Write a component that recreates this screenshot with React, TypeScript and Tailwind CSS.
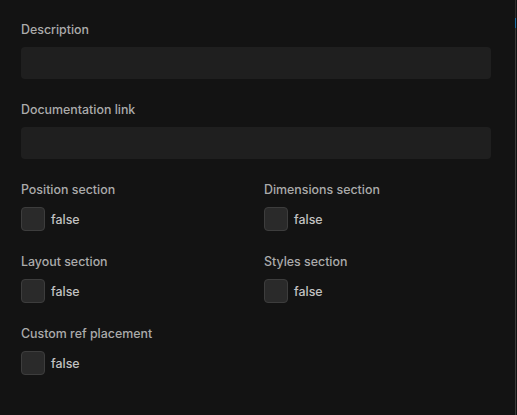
import React from 'react';

const font = { fontFamily: 'Inter, "Noto Sans", sans-serif' };

const TextField: React.FC<{ label: string }> = ({ label }) => (
  <div className="flex flex-col">
    <label className="text-[12.4px] font-medium leading-[18px] text-[#ababab] mt-px mb-[8px]">{label}</label>
    <div className="h-8 w-full rounded bg-[#1f1f1f]" />
  </div>
);

const BoolField: React.FC<{ label: string }> = ({ label }) => (
  <div className="flex flex-col">
    <label className="text-[12.4px] font-medium leading-[18px] text-[#ababab] mt-px mb-[8px]">{label}</label>
    <div className="flex items-center gap-[6px] h-6">
      <div className="w-6 h-6 rounded bg-[#2a2a2a] border border-[#3d3d3d]" />
      <span className="text-[12.4px] font-medium leading-[22px] pt-[2px] text-[#c2c2c2]">false</span>
    </div>
  </div>
);

export default function App() {
  return (
    <div className="flex h-[415px] w-full bg-[#131313]" style={font}>
      <div className="flex-1 flex flex-col gap-[21px] pt-5 pl-[21px] pr-[24px]">
        <TextField label="Description" />
        <TextField label="Documentation link" />
        <div className="grid grid-cols-2 gap-x-4 gap-y-[21px]">
          <BoolField label="Position section" />
          <BoolField label="Dimensions section" />
          <BoolField label="Layout section" />
          <BoolField label="Styles section" />
          <BoolField label="Custom ref placement" />
        </div>
      </div>
      {/* scrollbar edge */}
      <div className="w-px flex flex-col mr-px">
        <div className="h-[18px] bg-[#2e2e2e]" />
        <div className="h-[10px] bg-[#1d6fa5]" />
        <div className="flex-1 bg-[#3a3a3a]" />
      </div>
    </div>
  );
}
